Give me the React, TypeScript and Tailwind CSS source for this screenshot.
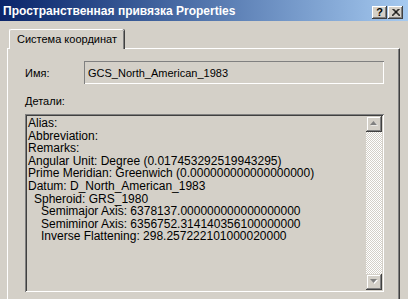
import React from "react";

const lines: { text: string; indent: number }[] = [
  { text: "Alias:", indent: 0 },
  { text: "Abbreviation:", indent: 0 },
  { text: "Remarks:", indent: 0 },
  { text: "Angular Unit: Degree (0.017453292519943295)", indent: 0 },
  { text: "Prime Meridian: Greenwich (0.000000000000000000)", indent: 0 },
  { text: "Datum: D_North_American_1983", indent: 0 },
  { text: "Spheroid: GRS_1980", indent: 1 },
  { text: "Semimajor Axis: 6378137.000000000000000000", indent: 2 },
  { text: "Semiminor Axis: 6356752.314140356100000000", indent: 2 },
  { text: "Inverse Flattening: 298.257222101000020000", indent: 2 },
];

function ScrollBtn({ up }: { up: boolean }) {
  return (
    <div className="w-[16px] h-[16px] bg-[#d4d0c8] shadow-[inset_-1px_-1px_0_#404040,inset_1px_1px_0_#d4d0c8,inset_-2px_-2px_0_#808080,inset_2px_2px_0_#fff] flex items-center justify-center">
      <svg width="8" height="6" viewBox="0 0 8 6">
        {up ? (
          <>
            <polygon points="4.5,1 8,4.5 1,4.5" fill="#fff" />
            <polygon points="3.5,0 7,4 0,4" fill="#808080" />
          </>
        ) : (
          <>
            <polygon points="1,1 8,1 4.5,5" fill="#fff" />
            <polygon points="0,0 7,0 3.5,4" fill="#808080" />
          </>
        )}
      </svg>
    </div>
  );
}

export default function App() {
  return (
    <div
      className="w-[408px] h-[299px] bg-[#d4d0c8] overflow-hidden text-black text-[11px] leading-[13px]"
      style={{ fontFamily: '"Liberation Sans", Arial, sans-serif' }}
    >
      {/* Title bar */}
      <div className="h-[21px] flex items-center bg-gradient-to-r from-[#0a246a] to-[#a6caf0] pl-[3px] pr-[5px]">
        <span className="text-white font-bold text-[12px] leading-[14px] whitespace-nowrap mt-[1px]">
          Пространственная привязка Properties
        </span>
        <div className="ml-auto flex gap-[1px] mt-[4px]">
          <div className="w-[15px] h-[13px] bg-[#d4d0c8] shadow-[inset_-1px_-1px_0_#404040,inset_1px_1px_0_#fff,inset_-2px_-2px_0_#808080] flex items-center justify-center">
            <span className="font-bold text-[11px] leading-[11px]">?</span>
          </div>
          <div className="w-[15px] h-[13px] bg-[#d4d0c8] shadow-[inset_-1px_-1px_0_#404040,inset_1px_1px_0_#fff,inset_-2px_-2px_0_#808080] flex items-center justify-center">
            <svg width="8" height="7" viewBox="0 0 8 7">
              <path d="M0.5 0 L7.5 7 M1.5 0 L8.5 7 M7.5 0 L0.5 7 M6.5 0 L-0.5 7" stroke="#000" strokeWidth="1" />
            </svg>
          </div>
        </div>
      </div>

      {/* Tab row */}
      <div className="mt-[8px] pl-[9px] flex">
        <div className="relative z-10 h-[20px] mb-[-1px] bg-[#d4d0c8] rounded-t-[2px] border-t border-l border-white shadow-[inset_-1px_0_0_#808080,1px_0_0_#404040] pl-[7px] pr-[7px] pt-[3px]">
          <span className="whitespace-nowrap">Система координат</span>
        </div>
      </div>

      {/* Panel */}
      <div className="ml-[7px] w-[393px] h-[260px] border-t border-l border-white shadow-[inset_-1px_0_0_#808080,inset_-2px_0_0_#d4d0c8] border-r border-r-[#404040] pl-[17px] pt-[12px]">
        <div className="flex items-center">
          <div className="w-[59px] pt-[2px]">Имя:</div>
          <div className="w-[300px] h-[23px] shadow-[inset_1px_1px_0_#808080,inset_-1px_-1px_0_#fff] flex items-center pl-[4px] pt-[1px]">
            GCS_North_American_1983
          </div>
        </div>
        <div className="mt-[11px]">Детали:</div>
        <div className="mt-[6px] w-[359px] h-[178px] shadow-[inset_1px_1px_0_#808080,inset_-1px_-1px_0_#fff,inset_2px_2px_0_#404040,inset_-2px_-2px_0_#d4d0c8] p-[2px] flex">
          <div className="flex-1 pl-[1px] pt-[1px] text-[12px] leading-[12.6px]">
            {lines.map((l, i) => (
              <div
                key={i}
                className={
                  "whitespace-nowrap " +
                  (l.indent === 0 ? "pl-0" : l.indent === 1 ? "pl-[6px]" : "pl-[13px]")
                }
              >
                {l.text}
              </div>
            ))}
          </div>
          <div className="w-[16px] flex flex-col">
            <ScrollBtn up={true} />
            <div className="flex-1 bg-[repeating-conic-gradient(#fff_0_25%,#d4d0c8_0_50%)] bg-[length:2px_2px]" />
            <ScrollBtn up={false} />
          </div>
        </div>
      </div>
    </div>
  );
}
